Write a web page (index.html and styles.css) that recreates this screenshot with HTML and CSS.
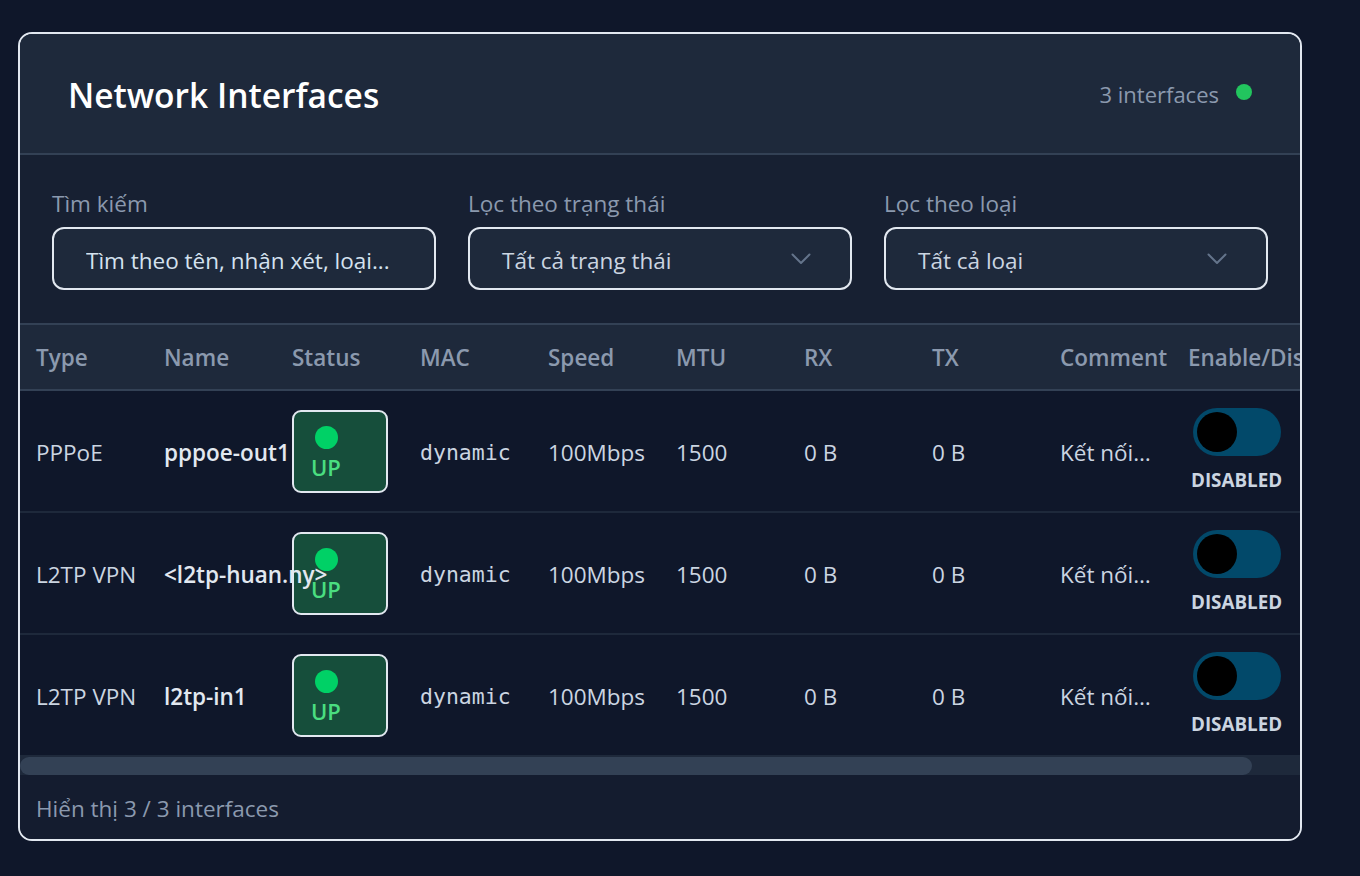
FILE: index.html
```html
<!DOCTYPE html>
<html lang="vi">
<head>
<meta charset="utf-8">
<title>Network Interfaces</title>
<link rel="stylesheet" href="styles.css">
</head>
<body>
<div class="card">
  <header class="card-header">
    <h1 class="title">Network Interfaces</h1>
    <div class="count"><span>3 interfaces</span><span class="live-dot"></span></div>
  </header>

  <section class="filters">
    <div class="field">
      <label class="field-label" for="q">Tìm kiếm</label>
      <input id="q" class="input" type="text" placeholder="Tìm theo tên, nhận xét, loại...">
    </div>
    <div class="field">
      <span class="field-label">Lọc theo trạng thái</span>
      <div class="select">
        <span>Tất cả trạng thái</span>
        <svg class="chevron" width="20" height="12" viewBox="0 0 20 12"><polyline points="1.5,1.5 10,10 18.5,1.5" fill="none" stroke="#64748b" stroke-width="2" stroke-linecap="round" stroke-linejoin="round"/></svg>
      </div>
    </div>
    <div class="field">
      <span class="field-label">Lọc theo loại</span>
      <div class="select">
        <span>Tất cả loại</span>
        <svg class="chevron" width="20" height="12" viewBox="0 0 20 12"><polyline points="1.5,1.5 10,10 18.5,1.5" fill="none" stroke="#64748b" stroke-width="2" stroke-linecap="round" stroke-linejoin="round"/></svg>
      </div>
    </div>
  </section>

  <div class="table-wrap">
    <table class="iface-table">
      <colgroup>
        <col class="c"><col class="c"><col class="c"><col class="c"><col class="c">
        <col class="c"><col class="c"><col class="c"><col class="c"><col class="c-last">
      </colgroup>
      <thead>
        <tr>
          <th>Type</th><th>Name</th><th>Status</th><th>MAC</th><th>Speed</th>
          <th>MTU</th><th>RX</th><th>TX</th><th>Comment</th><th>Enable/Disable</th>
        </tr>
      </thead>
      <tbody>
        <tr>
          <td>PPPoE</td>
          <td class="name">pppoe-out1</td>
          <td><div class="badge"><span class="badge-dot"></span><span class="badge-text">UP</span></div></td>
          <td class="mono">dynamic</td>
          <td>100Mbps</td>
          <td>1500</td>
          <td>0 B</td>
          <td>0 B</td>
          <td class="comment">Kết nối internet chính</td>
          <td><div class="toggle-wrap"><span class="toggle"><span class="knob"></span></span><span class="toggle-label">DISABLED</span></div></td>
        </tr>
        <tr>
          <td>L2TP VPN</td>
          <td class="name">&lt;l2tp-huan.ny&gt;</td>
          <td><div class="badge"><span class="badge-dot"></span><span class="badge-text">UP</span></div></td>
          <td class="mono">dynamic</td>
          <td>100Mbps</td>
          <td>1500</td>
          <td>0 B</td>
          <td>0 B</td>
          <td class="comment">Kết nối VPN chi nhánh</td>
          <td><div class="toggle-wrap"><span class="toggle"><span class="knob"></span></span><span class="toggle-label">DISABLED</span></div></td>
        </tr>
        <tr>
          <td>L2TP VPN</td>
          <td class="name">l2tp-in1</td>
          <td><div class="badge"><span class="badge-dot"></span><span class="badge-text">UP</span></div></td>
          <td class="mono">dynamic</td>
          <td>100Mbps</td>
          <td>1500</td>
          <td>0 B</td>
          <td>0 B</td>
          <td class="comment">Kết nối L2TP vào</td>
          <td><div class="toggle-wrap"><span class="toggle"><span class="knob"></span></span><span class="toggle-label">DISABLED</span></div></td>
        </tr>
      </tbody>
    </table>
  </div>
  <div class="scrollbar"><div class="scroll-thumb"></div></div>

  <footer class="card-footer">Hiển thị 3 / 3 interfaces</footer>
</div>
</body>
</html>
```

FILE: styles.css
```css
* { box-sizing: border-box; }

html, body { margin: 0; }

body {
  background: #0f172a;
  font-family: "Open Sans", "Noto Sans", sans-serif;
  color: #cbd5e1;
  padding: 32px 0 0 18px;
  min-height: 876px;
}

.card {
  width: 1284px;
  border: 2px solid #e2e8f0;
  border-radius: 14px;
  overflow: hidden;
  background: #0f172a;
}

.card-header {
  display: flex;
  align-items: center;
  justify-content: space-between;
  height: 121px;
  padding: 0 48px;
  background: #1e293b;
  border-bottom: 2px solid #334155;
}

.title {
  margin: 3px 0 0;
  font-size: 33.5px;
  font-weight: 600;
  color: #ffffff;
  line-height: 40px;
}

.count {
  display: flex;
  align-items: center;
  gap: 17px;
  font-size: 22px;
  color: #8b99ae;
}

.live-dot {
  width: 16px;
  height: 16px;
  border-radius: 50%;
  background: #22c55e;
  margin-top: -3px;
}

.filters {
  display: grid;
  grid-template-columns: repeat(3, 1fr);
  gap: 32px;
  padding: 32px 32px 33px;
  background: #172032;
  border-bottom: 2px solid #334155;
}

.field { display: flex; flex-direction: column; }

.field-label {
  font-size: 22.5px;
  line-height: 34px;
  color: #8b99ae;
  margin-bottom: 6px;
}

.input,
.select {
  height: 63px;
  border: 2px solid #e2e8f0;
  border-radius: 12px;
  background: #1e293b;
  padding: 3px 32px 0;
  font-family: inherit;
  font-size: 22.5px;
  color: #d5e2ef;
  outline: none;
  width: 100%;
}

.input::placeholder { color: #d5e2ef; opacity: 1; }

.select {
  display: flex;
  align-items: center;
  justify-content: space-between;
  padding-right: 39px;
  color: #cbd5e1;
}

.chevron { display: block; margin-top: -2px; }

.table-wrap {
  overflow: hidden;
}

.iface-table {
  width: 1330px;
  table-layout: fixed;
  border-collapse: separate;
  border-spacing: 0;
  font-size: 22.5px;
}

.c { width: 128px; }
.c-last { width: 178px; }

.iface-table th {
  height: 66px;
  padding: 0 16px;
  text-align: left;
  font-weight: 600;
  color: #8b99ae;
  background: #1e293b;
  border-bottom: 2px solid #334155;
  white-space: nowrap;
  overflow: hidden;
}

.iface-table td {
  height: 122px;
  padding: 2px 16px 0;
  border-bottom: 2px solid #1e293b;
  white-space: nowrap;
  vertical-align: middle;
  color: #cbd5e1;
}

.iface-table td.name {
  font-weight: 600;
  color: #e2e8f0;
}

.iface-table td.mono {
  font-family: "DejaVu Sans Mono", "Liberation Mono", monospace;
  font-size: 21.5px;
  color: #cbd5e1;
}

.iface-table td.comment {
  overflow: hidden;
  text-overflow: ellipsis;
}

.badge {
  width: 96px;
  height: 83px;
  margin-top: -2px;
  border: 2px solid #e2e8f0;
  border-radius: 9px;
  background: #164e3b;
  display: flex;
  flex-direction: column;
  align-items: flex-start;
  padding: 14px 0 0 17px;
}

.badge-dot {
  width: 23px;
  height: 23px;
  border-radius: 50%;
  background: #00d166;
  margin-left: 4px;
}

.badge-text {
  font-weight: 600;
  font-size: 22px;
  line-height: 30px;
  margin-top: 3px;
  color: #4ade80;
}

.toggle-wrap {
  display: inline-flex;
  flex-direction: column;
  align-items: center;
  margin-left: 3px;
  margin-top: -4px;
}

.toggle {
  width: 88px;
  height: 48px;
  border-radius: 24px;
  background: #02496a;
  padding: 4px;
  display: flex;
}

.knob {
  width: 40px;
  height: 40px;
  border-radius: 50%;
  background: #000;
}

.toggle-label {
  margin-top: 12px;
  font-size: 18.8px;
  line-height: 25px;
  font-weight: 700;
  color: #cbd5e1;
}

.scrollbar {
  height: 18px;
  background: #1e293b;
}

.scroll-thumb {
  width: 1232px;
  height: 100%;
  border-radius: 9px;
  background: #334155;
}

.card-footer {
  height: 64px;
  display: flex;
  align-items: center;
  padding: 2px 16px 0;
  background: #141c2f;
  font-size: 22.5px;
  color: #8b99ae;
}
```
